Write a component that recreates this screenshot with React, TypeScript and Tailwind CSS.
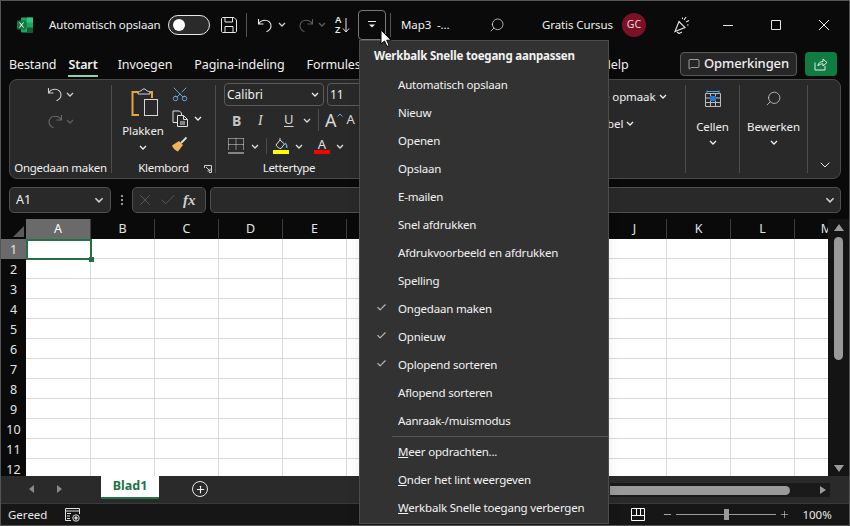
import React from 'react';
import { Search, Scissors, ChevronDown, X, Plus, Check, Minus, MessageSquare } from 'lucide-react';

const menuTop = ['Automatisch opslaan', 'Nieuw', 'Openen', 'Opslaan', 'E-mailen', 'Snel afdrukken', 'Afdrukvoorbeeld en afdrukken', 'Spelling', 'Ongedaan maken', 'Opnieuw', 'Oplopend sorteren', 'Aflopend sorteren', 'Aanraak-/muismodus'];
const checked = ['Ongedaan maken', 'Opnieuw', 'Oplopend sorteren'];
// F t/m I vallen onder het menu
const columns = ['A', 'B', 'C', 'D', 'E', '', '', '', '', 'J', 'K', 'L', 'M'];
const rows = [1, 2, 3, 4, 5, 6, 7, 8, 9, 10, 11, 12];

function Chev({ className = '' }: { className?: string }) {
  return (
    <svg viewBox="0 0 8 5" className={'h-[5px] w-[8px] shrink-0 ' + className} fill="none" stroke="currentColor" strokeWidth="1.3">
      <path d="M1 1l3 3 3-3" />
    </svg>
  );
}

function UndoIcon({ className = '', flip = false }: { className?: string; flip?: boolean }) {
  return (
    <svg viewBox="0 0 16 16" className={'h-[16px] w-[16px] shrink-0 ' + className} fill="none" stroke="currentColor" strokeWidth="1.1" style={flip ? { transform: 'scaleX(-1)' } : undefined}>
      <path d="M1.5 2v5h5M1.8 6.7C3 4.6 5 3.2 8 3.2c3.5 0 6 2.500 6 5.600 0 2.800-1.700 4.800-4.500 6" />
    </svg>
  );
}

function ExcelLogo() {
  return (
    <svg viewBox="0 0 16 16" className="h-[16px] w-[16px]">
      <rect x="4" y="0.500" width="12" height="15" rx="1" fill="#21a366" />
      <rect x="10" y="0.500" width="6" height="5" fill="#33c481" />
      <rect x="4" y="5.500" width="6" height="5" fill="#107c41" />
      <rect x="10" y="10.500" width="6" height="5" fill="#185c37" />
      <rect x="0" y="3.500" width="9" height="9" rx="1" fill="#0f7b41" />
      <path d="M2.500 5.500l4 5M6.500 5.500l-4 5" stroke="#fff" strokeWidth="1" />
    </svg>
  );
}

function Sep({ className = '' }: { className?: string }) {
  return <div className={'w-px shrink-0 bg-[#4d4d4d] ' + className} />;
}

function Group({ label, width, children, launcher }: { label?: string; width: string; children: React.ReactNode; launcher?: boolean }) {
  return (
    <div className={'relative flex flex-col ' + width}>
      <div className="relative flex-1">{children}</div>
      <div className="flex h-[18px] items-start justify-center text-[11.5px] leading-[16px] tracking-[-0.3px] text-[#f0f0f0]">{label}</div>
      {launcher && (
        <svg viewBox="0 0 8 8" className="absolute bottom-[5px] right-[3px] h-[8px] w-[8px]" fill="none" stroke="#cfcfcf" strokeWidth="1">
          <path d="M0.500 3V0.500H7.500V7.500H5M2 2l4 4M6 3.500V6H3.500" />
        </svg>
      )}
    </div>
  );
}

function TitleBar() {
  return (
    <div className="flex h-[47px] items-center text-[#f0f0f0]">
      <div className="ml-[16px]"><ExcelLogo /></div>
      <span className="ml-[16px] w-[111px] whitespace-nowrap text-[11.5px] tracking-[-0.1px]">Automatisch opslaan</span>
      <div className="ml-[8px] flex h-[20px] w-[42px] items-center rounded-full border border-[#e8e8e8] bg-[#2a2a2a] pl-[4px]">
        <div className="h-[12px] w-[12px] rounded-full bg-white" />
      </div>
      <svg viewBox="0 0 16 16" className="ml-[11px] h-[16px] w-[16px]" fill="none" stroke="#e8e8e8" strokeWidth="1">
        <path d="M0.500 2C0.500 1 1 0.500 2 0.500H13L15.500 3V14C15.500 15 15 15.500 14 15.500H2C1 15.500 0.500 15 0.500 14Z M4 0.500V5H11.500V0.500 M4 15.500V9.500H12V15.500" />
      </svg>
      <Sep className="ml-[9px] h-[24px] bg-[#555]" />
      <UndoIcon className="ml-[10px] text-[#e8e8e8]" />
      <Chev className="ml-[5px] text-[#d0d0d0]" />
      <UndoIcon flip className="ml-[12px] text-[#5c5c5c]" />
      <Chev className="ml-[4px] text-[#5c5c5c]" />
      <div className="ml-[9px] flex h-[24px] w-[20px] items-center text-[#e8e8e8]">
        <div className="flex flex-col text-[9.5px] font-semibold leading-[10px]"><span>A</span><span>Z</span></div>
        <svg viewBox="0 0 8 16" className="ml-[1px] h-[16px] w-[8px]" fill="none" stroke="currentColor" strokeWidth="1"><path d="M4 1v14M1 11.500L4 15l3-3.500" /></svg>
      </div>
      <div className="ml-[3px] flex h-[30px] w-[28px] items-center justify-center rounded-[4px] border border-[#7a7a7a]">
        <svg viewBox="0 0 8 7" className="h-[7px] w-[8px]" fill="#e8e8e8"><rect width="8" height="1" /><path d="M1 3.500h6L4 6.500z" /></svg>
      </div>
      <Sep className="ml-[4px] h-[24px] bg-[#555]" />
      <span className="ml-[10px] w-[80px] text-[11.5px] tracking-[-0.1px]">Map3&nbsp; -...</span>
      <Search className="ml-[8px] h-[16px] w-[16px] -scale-x-100 text-[#d8d8d8]" strokeWidth={1.2} />
      <span className="ml-[37px] text-[11.5px] tracking-[-0.1px]">Gratis Cursus</span>
      <div className="ml-[9px] flex h-[24px] w-[24px] items-center justify-center rounded-full bg-[#7c1126] text-[10.5px] text-[#e8d8dc]">GC</div>
      <svg viewBox="0 0 16 18" className="ml-[28px] h-[18px] w-[16px]" fill="none" stroke="#e8e8e8" strokeWidth="1.1">
        <path d="M1 15.500L5 5.500l6 6zM3 16l2 1.500 3-1.500M10 4l2-3M12 6l3-1.500M8.500 3V1.500M13 9h1.500" />
      </svg>
      <svg viewBox="0 0 10 10" className="ml-[33px] h-[10px] w-[10px]" fill="none" stroke="#e8e8e8" strokeWidth="1"><path d="M0 5.500h10" /></svg>
      <svg viewBox="0 0 10 10" className="ml-[38px] h-[10px] w-[10px]" fill="none" stroke="#e8e8e8" strokeWidth="1"><path d="M.5.5h9v9h-9z" /></svg>
      <svg viewBox="0 0 10 10" className="ml-[38px] h-[10px] w-[10px]" fill="none" stroke="#e8e8e8" strokeWidth="1"><path d="M0 0l10 10M10 0L0 10" /></svg>
    </div>
  );
}

function TabsRow() {
  return (
    <div className="flex h-[31px] items-center pt-[3px] text-[12.5px] tracking-[-0.1px] text-[#f0f0f0]">
      <span className="ml-[8px]">Bestand</span>
      <span className="relative ml-[12px] font-semibold">
        Start
        <span className="absolute left-0 right-0 top-[19px] h-[2px] bg-[#8fd0ae]" />
      </span>
      <span className="ml-[20px]">Invoegen</span>
      <span className="ml-[22px]">Pagina-indeling</span>
      <span className="ml-[22px]">Formules</span>
      <span className="ml-[241px]">Help</span>
      <div className="-mt-[2px] ml-auto flex h-[24px] w-[117px] items-center justify-center gap-[4px] rounded-[4px] border border-[#5a5a5a] bg-[#262626] text-[13px] font-medium">
        <MessageSquare className="h-[12px] w-[12px]" strokeWidth={1.2} />
        Opmerkingen
      </div>
      <div className="-mt-[2px] ml-[8px] mr-[12px] flex h-[24px] w-[32px] items-center justify-center rounded-[4px] bg-[#107c41]">
        <svg viewBox="0 0 14 14" className="h-[14px] w-[14px]" fill="none" stroke="#e8e8e8" strokeWidth="1">
          <path d="M1 5.500V13H11V9M4 9c0-3 2.500-4.500 5-4.500V2l4 3.500L9 9V6.800C7 6.800 5 7.500 4 9z" />
        </svg>
      </div>
    </div>
  );
}

function Ribbon() {
  return (
    <div className="mx-[8px] flex h-[100px] rounded-[8px] border border-[#4a4a4a] bg-[#292929] text-[#f0f0f0]">
      <Group label="Ongedaan maken" width="w-[101px]">
        <div className="flex items-center pl-[37px] pt-[6px]">
          <UndoIcon className="text-[#cfcfcf]" />
          <Chev className="ml-[3px] text-[#cfcfcf]" />
        </div>
        <div className="mt-[11px] flex items-center pl-[37px]">
          <UndoIcon flip className="text-[#6a6a6a]" />
          <Chev className="ml-[3px] text-[#5f5f5f]" />
        </div>
      </Group>
      <Sep className="my-[5px]" />
      <Group label="Klembord" width="w-[103px]" launcher>
        <div className="flex pl-[10px] pt-[8px]">
          <div className="flex w-[42px] flex-col items-center">
            <svg viewBox="0 0 28 31" className="ml-[4px] h-[31px] w-[28px]" fill="none">
              <path d="M8 4H1.500V27H8" stroke="#e8a33d" strokeWidth="2" />
              <path d="M18 4h3v6" stroke="#e8a33d" strokeWidth="2" />
              <path d="M7 5c0-2 3-1.500 4-3 1-1.500 3-1.500 4 0 1 1.500 4 1 4 3v1H7z" stroke="#cfcfcf" strokeWidth="1" fill="#292929" />
              <rect x="13.500" y="11.500" width="13" height="16" stroke="#d8d8d8" strokeWidth="1" />
            </svg>
            <span className="mt-[3px] text-[11.5px] tracking-[-0.1px]">Plakken</span>
            <Chev className="mt-[6px]" />
          </div>
          <div className="ml-[6px] flex flex-col items-start pl-[2px]">
            <Scissors className="ml-[-1px] mt-[-3px] h-[18px] w-[18px] -rotate-90 text-[#6fb4ea]" strokeWidth={1.2} />
            <div className="mt-[7px] flex items-center">
              <svg viewBox="0 0 17 17" className="h-[17px] w-[17px]" fill="none" stroke="#e0e0e0" strokeWidth="1">
                <path d="M5.500 12.500H1V1h6.500l2 2v2M5.500 5.500h6l4 4v7h-10zM11.500 5.500v4h4M8 12h5M8 14h5" />
              </svg>
              <Chev className="ml-[5px]" />
            </div>
            <svg viewBox="0 0 17 16" className="ml-[-1px] mt-[9px] h-[16px] w-[17px]" fill="none">
              <path d="M1 9.500L8 5l4 4-5 6.500c-2-.5-5-3-6-6z" fill="#f0b45a" />
              <path d="M10 7l5.500-5.500" stroke="#d8d8d8" strokeWidth="2" />
            </svg>
          </div>
        </div>
      </Group>
      <Sep className="my-[5px]" />
      <Group label="Lettertype" width="w-[146px]">
        <div className="w-[260px] pl-[8px] pt-[3px]">
          <div className="flex gap-[3px]">
            <div className="flex h-[23px] w-[100px] items-center justify-between rounded-[4px] border border-[#5a5a5a] pl-[2px] pr-[4px] text-[12px]">Calibri<Chev /></div>
            <div className="flex h-[23px] w-[60px] items-center rounded-[4px] border border-[#5a5a5a] pl-[2px] text-[12px]">11</div>
          </div>
          <div className="mt-[2px] flex h-[24px] items-center text-[#d8d8d8]">
            <span className="ml-[8px] w-[26px] text-[14px] font-bold text-[#c4c4c4]">B</span>
            <span className="w-[26px] font-['Liberation_Serif',serif] text-[14px] italic">I</span>
            <span className="w-[19px] text-[13px] underline underline-offset-2">U</span>
            <Chev />
            <Sep className="ml-[7px] h-[22px]" />
            <span className="ml-[6px] text-[18px] leading-[20px]">A</span>
            <svg viewBox="0 0 6 4" className="mb-[10px] h-[4px] w-[6px]" fill="none" stroke="#5aa9e6" strokeWidth="1"><path d="M.5 3.500L3 1l2.500 2.500" /></svg>
            <span className="ml-[4px] text-[13px]">A</span>
          </div>
          <div className="mt-[2px] flex h-[24px] items-center text-[#e0e0e0]">
            <svg viewBox="0 0 16 16" className="ml-[4px] h-[16px] w-[16px]" fill="none" stroke="#e0e0e0" strokeWidth="1" strokeDasharray="1 1">
              <path d="M.5.500h15M.5.500v12M15.500.500v12M8 .500v12M.5 6.500h15" />
              <path d="M0 15h16" strokeDasharray="none" />
            </svg>
            <Chev className="ml-[7px]" />
            <Sep className="ml-[7px] h-[16px]" />
            <div className="ml-[6px] flex w-[16px] flex-col items-center">
              <svg viewBox="0 0 14 12" className="h-[12px] w-[14px]" fill="none" stroke="#e0e0e0" strokeWidth="1"><path d="M2 7l4-5 4.500 4-3.500 4.500c-2 0-4-1.500-5-3.500zM6 2V0" /><path d="M11 5c1.500 1 2 3 1.500 5" stroke="#5aa9e6" strokeWidth="1.500" /></svg>
              <div className="h-[4px] w-[16px] bg-[#ffff00]" />
            </div>
            <Chev className="ml-[6px]" />
            <div className="ml-[11px] flex w-[16px] flex-col items-center">
              <span className="h-[12px] text-[13px] leading-[12px]">A</span>
              <div className="h-[4px] w-[16px] bg-[#ff0000]" />
            </div>
            <Chev className="ml-[6px]" />
          </div>
        </div>
      </Group>
      <Sep className="my-[5px]" />
      <Group width="flex-1">
        <div className="pl-[161px] pt-[8px] text-[11.5px] tracking-[-0.1px]">
          <div className="flex items-center gap-[3px] whitespace-nowrap">Voorwaardelijke opmaak<Chev /></div>
          <div className="mt-[10px] flex items-center gap-[3px] whitespace-nowrap">Opmaken als tabel<Chev /></div>
        </div>
      </Group>
      <Sep className="my-[5px]" />
      <Group width="w-[53px]">
        <div className="flex flex-col items-center pt-[10px] text-[11.5px] tracking-[-0.1px]">
          <svg viewBox="0 0 16 17" className="h-[17px] w-[16px]" fill="none" stroke="#bcbcbc" strokeWidth="1">
            <path d="M.5 3.500h15v13H.5zM.5 8h15M.5 12.500h15M5.500 3.500v13M10.500 3.500v13" />
            <path d="M2 .5v3M14 .5v3M2 1.500h12" stroke="#4aa3e8" />
            <rect x="5" y="6" width="6" height="5" fill="#1a7ad4" stroke="none" />
          </svg>
          <span className="mt-[11px]">Cellen</span>
          <Chev className="mt-[5px]" />
        </div>
      </Group>
      <Sep className="my-[5px]" />
      <Group width="w-[67px]">
        <div className="flex flex-col items-center pt-[10px] text-[11.5px] tracking-[-0.1px]">
          <Search className="h-[17px] w-[17px] -scale-x-100 text-[#d0d0d0]" strokeWidth={1.1} />
          <span className="mt-[11px]">Bewerken</span>
          <Chev className="mt-[5px]" />
        </div>
      </Group>
      <Sep className="my-[5px]" />
      <div className="flex w-[32px] items-end justify-center pb-[5px] pl-[2px]">
        <ChevronDown className="h-[16px] w-[16px] text-[#e8e8e8]" strokeWidth={1.5} />
      </div>
    </div>
  );
}

function FormulaBar() {
  return (
    <div className="mx-[8px] mt-[8px] flex h-[26px] items-center text-[#f0f0f0]">
      <div className="flex h-full w-[102px] items-center justify-between rounded-[5px] border border-[#4f4f4f] bg-[#292929] px-[6px] text-[12.5px]">
        A1
        <Chev className="h-[6px] w-[10px] text-[#d0d0d0]" />
      </div>
      <div className="ml-[10px] flex h-[10px] w-[2px] flex-col justify-between">
        <div className="h-[2px] w-[2px] bg-[#999]" /><div className="h-[2px] w-[2px] bg-[#999]" /><div className="h-[2px] w-[2px] bg-[#999]" />
      </div>
      <div className="ml-[9px] flex h-full w-[74px] items-center rounded-[5px] border border-[#4f4f4f] bg-[#292929] pl-[3px]">
        <X className="h-[18px] w-[18px] text-[#6e6e6e]" strokeWidth={0.9} />
        <Check className="ml-[5px] h-[18px] w-[18px] text-[#6e6e6e]" strokeWidth={0.9} />
        <span className="ml-[6px] font-['Liberation_Serif',serif] text-[15px] font-bold italic text-[#cfcfcf]">fx</span>
      </div>
      <div className="ml-[4px] flex h-full flex-1 items-center justify-end rounded-[5px] border border-[#4f4f4f] bg-[#292929] pr-[5px]">
        <Chev className="h-[6px] w-[10px] text-[#d0d0d0]" />
      </div>
    </div>
  );
}

function Sheet() {
  return (
    <div className="mt-[6px] flex h-[257px] overflow-hidden">
      <div className="relative flex-1 overflow-hidden">
        <div className="flex h-[20px]">
          <div className="flex w-[25px] shrink-0 items-end justify-end pb-[2px] pr-[2px]">
            <div className="h-0 w-0 border-b-[11px] border-l-[11px] border-b-[#5a5a5a] border-l-transparent" />
          </div>
          {columns.map((c, i) => (
            <div key={i} className={'flex shrink-0 items-center justify-center border-r border-[#3c3c3c] pt-[1px] text-[12.5px] ' + (c === 'A' ? 'w-[65px] bg-[#6a6a6a] text-white' : 'w-[64px] text-[#e4e4e4]')}>{c}</div>
          ))}
        </div>
        {rows.map((r) => (
          <div key={r} className="flex h-[20px]">
            <div className={'flex w-[25px] shrink-0 items-center justify-center pt-[2px] text-[12.5px] text-[#e4e4e4] ' + (r === 1 ? 'bg-[#6a6a6a]' : '')}>{r}</div>
            {columns.map((c, i) => (
              <div key={i} className={'shrink-0 border-b border-r border-[#d9d9d9] bg-white ' + (c === 'A' ? 'w-[65px]' : 'w-[64px]')} />
            ))}
          </div>
        ))}
        <div className="absolute left-[25px] top-[20px] h-[21px] w-[66px] border-2 border-[#217346]" />
        <div className="absolute left-[88px] top-[38px] h-[5px] w-[5px] bg-[#217346]" />
      </div>
      <div className="flex w-[21px] shrink-0 flex-col items-center bg-[#141414] pt-[5px]">
        <div className="h-0 w-0 border-b-[7px] border-l-[5px] border-r-[5px] border-b-[#9a9a9a] border-l-transparent border-r-transparent" />
        <div className="mt-[6px] h-[123px] w-[9px] rounded-full bg-[#9a9a9a]" />
        <div className="mt-auto mb-[4px] h-0 w-0 border-t-[7px] border-l-[5px] border-r-[5px] border-t-[#9a9a9a] border-l-transparent border-r-transparent" />
      </div>
    </div>
  );
}

function SheetTabs() {
  return (
    <div className="flex h-[27px] bg-[#2a2a2a] text-[#d8d8d8]">
      <div className="ml-[28px] mt-[9px] h-0 w-0 border-b-[4px] border-r-[5px] border-t-[4px] border-b-transparent border-r-[#8a8a8a] border-t-transparent" />
      <div className="ml-[23px] mt-[9px] h-0 w-0 border-b-[4px] border-l-[5px] border-t-[4px] border-b-transparent border-l-[#8a8a8a] border-t-transparent" />
      <div className="ml-[39px] flex h-[23px] w-[58px] items-center justify-center border-b-2 border-[#217346] bg-white text-[12.5px] font-bold text-[#217346]">Blad1</div>
      <div className="ml-[33px] mt-[5px] flex h-[16px] w-[16px] items-center justify-center rounded-full border border-[#e8e8e8]">
        <Plus className="h-[11px] w-[11px] text-[#f0f0f0]" strokeWidth={2.500} />
      </div>
      <div className="ml-auto mr-[19px] mt-[7px] flex h-[14px] w-[220px] items-center bg-[#1a1a1a]">
        <div className="h-[9px] w-[180px] rounded-r-full bg-[#9a9a9a]" />
        <div className="ml-auto mr-[4px] h-0 w-0 border-b-[4px] border-l-[6px] border-t-[4px] border-b-transparent border-l-[#9a9a9a] border-t-transparent" />
      </div>
    </div>
  );
}

function StatusBar() {
  return (
    <div className="flex h-[22px] items-center border-t border-[#3a3a3a] bg-[#161616] text-[11.5px] text-[#e8e8e8]">
      <span className="ml-[7px]">Gereed</span>
      <svg viewBox="0 0 15 14" className="ml-[18px] h-[14px] w-[15px]" fill="none" stroke="#e0e0e0" strokeWidth="1">
        <path d="M6 12.500H.5V.5h14V6M.5 3h14M2 5.500h4M2 8h3M2 10.500h3" />
        <circle cx="11" cy="10" r="3.200" />
        <circle cx="11" cy="10" r="1.200" fill="#e0e0e0" />
      </svg>
      <svg viewBox="0 0 14 13" className="ml-[551px] h-[13px] w-[14px]" fill="none" stroke="#fff" strokeWidth="1">
        <path d="M.5.5h13v12H.5zM.5 7.500h13M5.500.5v7M9.500.5v7" />
      </svg>
      <Minus className="ml-[17px] h-[11px] w-[11px]" strokeWidth={1.5} />
      <div className="relative ml-[3px] h-px w-[100px] bg-[#9a9a9a]">
        <div className="absolute left-[48px] top-[-5px] h-[11px] w-[5px] bg-[#9a9a9a]" />
      </div>
      <Plus className="ml-[3px] h-[11px] w-[11px]" strokeWidth={1.2} />
      <span className="ml-[12px]">100%</span>
    </div>
  );
}

function QuickMenu() {
  return (
    <div className="absolute left-[358px] top-[39px] z-10 h-[484px] w-[250px] border border-[#4c4c4c] bg-[#323232] text-[11.5px] tracking-[-0.2px] text-[#f2f2f2] shadow-lg">
      <div className="flex h-[30px] items-center pl-[14px] font-bold">Werkbalk Snelle toegang aanpassen</div>
      {menuTop.map((item) => (
        <div key={item} className="relative flex h-[28px] items-center pl-[38px]">
          {checked.includes(item) && <Check className="absolute left-[16px] top-[7px] h-[11px] w-[11px] text-[#b8b8b8]" strokeWidth={2.500} />}
          {item}
        </div>
      ))}
      <div className="ml-[32px] mt-[1px] h-px bg-[#555]" />
      <div className="mt-[1px]">
        <div className="flex h-[28px] items-center pl-[38px]"><span><u>M</u>eer opdrachten...</span></div>
        <div className="flex h-[28px] items-center pl-[38px]"><span><u>O</u>nder het lint weergeven</span></div>
        <div className="flex h-[28px] items-center pl-[38px]"><span><u>W</u>erkbalk Snelle toegang verbergen</span></div>
      </div>
    </div>
  );
}

export default function App() {
  return (
    <div className="relative h-[526px] w-[850px] overflow-hidden border border-[#555] bg-[#0a0a0a] font-['Noto_Sans','Open_Sans',sans-serif]">
      <TitleBar />
      <TabsRow />
      <Ribbon />
      <FormulaBar />
      <Sheet />
      <SheetTabs />
      <StatusBar />
      <QuickMenu />
      <svg viewBox="0 0 12 18" className="absolute left-[379px] top-[28px] z-20 h-[18px] w-[12px]">
        <path d="M1 1v14l3.500-3 2.500 5.500 2.200-1-2.500-5.300H11z" fill="#fff" stroke="#000" strokeWidth="1" />
      </svg>
    </div>
  );
}
